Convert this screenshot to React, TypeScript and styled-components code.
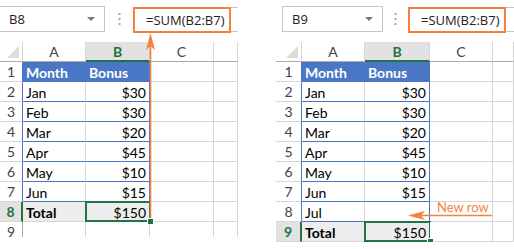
import React from 'react'
import styled, { createGlobalStyle, css } from 'styled-components'

const GREEN = '#217346'
const BLUE = '#4a76c6'
const GRID = '#d6d6d6'
const ORANGE = '#f5813f'

const GlobalStyle = createGlobalStyle`
  html, body {
    margin: 0;
    padding: 0;
    background: #fff;
  }
  body {
    font-family: Lato, 'Open Sans', sans-serif;
  }
`

type RowKind = 'head' | 'data' | 'total' | 'empty'

interface SheetRow {
  kind: RowKind
  month?: string
  bonus?: string
}

interface SheetConfig {
  name: string
  cols: number[]
  nameOffset: number
  nameWidth: number
  dotsWidth: number
  height: number
  rows: SheetRow[]
}

const baseRows: SheetRow[] = [
  { kind: 'head', month: 'Month', bonus: 'Bonus' },
  { kind: 'data', month: 'Jan', bonus: '$30' },
  { kind: 'data', month: 'Feb', bonus: '$30' },
  { kind: 'data', month: 'Mar', bonus: '$20' },
  { kind: 'data', month: 'Apr', bonus: '$45' },
  { kind: 'data', month: 'May', bonus: '$10' },
  { kind: 'data', month: 'Jun', bonus: '$15' },
]

const leftSheet: SheetConfig = {
  name: 'B8',
  cols: [23, 63, 64, 64, 24],
  nameOffset: -1,
  nameWidth: 106,
  dotsWidth: 28,
  height: 237,
  rows: [...baseRows, { kind: 'total', month: 'Total', bonus: '$150' }, { kind: 'empty' }],
}

const rightSheet: SheetConfig = {
  name: 'B9',
  cols: [26, 63, 65, 63, 21],
  nameOffset: 6,
  nameWidth: 101,
  dotsWidth: 25,
  height: 242,
  rows: [
    ...baseRows,
    { kind: 'data', month: 'Jul', bonus: '' },
    { kind: 'total', month: 'Total', bonus: '$150' },
  ],
}

const Page = styled.div`
  display: flex;
  gap: 38px;
  width: 514px;
`

const Panel = styled.div<{ $height: number }>`
  position: relative;
  width: 238px;
  height: ${(p) => p.$height}px;
  overflow: hidden;
`

const FormulaBar = styled.div`
  display: flex;
  align-items: stretch;
  margin-top: 6px;
  height: 26px;
`

const NameBox = styled.div<{ $offset: number; $width: number }>`
  box-sizing: border-box;
  margin-left: ${(p) => p.$offset}px;
  width: ${(p) => p.$width}px;
  border: 1px solid #c6c6c6;
  display: flex;
  align-items: center;
  justify-content: space-between;
  padding: 0 9px 0 9px;
  font-family: 'Open Sans', sans-serif;
  font-size: 13px;
  color: #222;
`

const DropArrow = styled.span`
  width: 0;
  height: 0;
  border-left: 4px solid transparent;
  border-right: 4px solid transparent;
  border-top: 4px solid #777;
`

const Dots = styled.div<{ $width: number }>`
  width: ${(p) => p.$width}px;
  display: flex;
  align-items: center;
  justify-content: center;
`

const FormulaArea = styled.div`
  flex: 1;
  box-sizing: border-box;
  border-top: 1px solid #c6c6c6;
  border-bottom: 1px solid #c6c6c6;
  margin-top: 1px;
  display: flex;
`

const FormulaBox = styled.div`
  box-sizing: border-box;
  width: 98px;
  height: 26px;
  margin-top: -1px;
  border: 2px solid ${ORANGE};
  display: flex;
  align-items: center;
  padding-left: 11px;
  font-family: 'Open Sans', sans-serif;
  font-size: 13px;
  color: #222;
`

const Grid = styled.div<{ $cols: number[] }>`
  display: grid;
  grid-template-columns: ${(p) => p.$cols.map((c) => `${c}px`).join(' ')};
  grid-auto-rows: 20px;
  margin-top: 10px;
`

const cellBase = css`
  box-sizing: border-box;
  display: flex;
  align-items: center;
  font-size: 14px;
  color: #000;
  white-space: nowrap;
  overflow: visible;
  position: relative;
`

const ColHead = styled.div<{ $selected?: boolean }>`
  ${cellBase};
  justify-content: center;
  color: #444;
  border-right: 1px solid ${GRID};
  border-bottom: 1px solid #ababab;
  ${(p) =>
    p.$selected &&
    css`
      background: #e2e2e2;
      color: ${GREEN};
      font-weight: 700;
      border-bottom: 2px solid ${GREEN};
    `}
`

const Corner = styled.div`
  ${cellBase};
  border-right: 1px solid ${GRID};
  border-bottom: 1px solid #ababab;
  &::after {
    content: '';
    position: absolute;
    right: 3px;
    bottom: 3px;
    border-left: 12px solid transparent;
    border-bottom: 12px solid #dcdcdc;
  }
`

const RowHead = styled.div<{ $edge: string; $selected?: boolean }>`
  ${cellBase};
  justify-content: center;
  color: #444;
  border-bottom: 1px solid ${GRID};
  border-right: ${(p) => (p.$selected ? 2 : 1)}px solid ${(p) => p.$edge};
  ${(p) =>
    p.$selected &&
    css`
      background: #e2e2e2;
      color: ${GREEN};
      font-weight: 700;
    `}
`

const Cell = styled.div<{
  $fill?: string
  $bold?: boolean
  $light?: boolean
  $right?: boolean
  $edgeRight: string
  $edgeBottom: string
  $active?: boolean
}>`
  ${cellBase};
  background: ${(p) => p.$fill || '#fff'};
  font-weight: ${(p) => (p.$bold ? 700 : 400)};
  color: ${(p) => (p.$light ? '#fff' : '#000')};
  justify-content: ${(p) => (p.$right ? 'flex-end' : 'flex-start')};
  padding: 1px 3px 0 3px;
  border-right: 1px solid ${(p) => p.$edgeRight};
  border-bottom: 1px solid ${(p) => p.$edgeBottom};
  ${(p) =>
    p.$active &&
    css`
      &::after {
        content: '';
        position: absolute;
        left: -1px;
        top: -1px;
        right: -2px;
        bottom: -1px;
        border: 2px solid ${GREEN};
      }
      &::before {
        content: '';
        position: absolute;
        right: -5px;
        bottom: -4px;
        width: 5px;
        height: 5px;
        background: ${GREEN};
        border: 1px solid #fff;
        z-index: 2;
      }
    `}
`

const Note = styled.div`
  position: absolute;
  left: 161px;
  top: 199px;
  font-family: Lato, sans-serif;
  font-size: 13px;
  color: ${ORANGE};
`

const Overlay = styled.svg`
  position: absolute;
  overflow: visible;
  pointer-events: none;
`

const DotsIcon = () => (
  <svg width="3" height="14" viewBox="0 0 3 14">
    <rect x="0.5" y="1" width="2" height="2" fill="#a6a6a6" />
    <rect x="0.5" y="6" width="2" height="2" fill="#a6a6a6" />
    <rect x="0.5" y="11" width="2" height="2" fill="#a6a6a6" />
  </svg>
)

const letters = ['A', 'B', 'C', '']

const Sheet = ({ sheet, children }: { sheet: SheetConfig; children?: React.ReactNode }) => (
  <Panel $height={sheet.height}>
    <FormulaBar>
      <NameBox $offset={sheet.nameOffset} $width={sheet.nameWidth}>
        <span>{sheet.name}</span>
        <DropArrow />
      </NameBox>
      <Dots $width={sheet.dotsWidth}>
        <DotsIcon />
      </Dots>
      <FormulaArea>
        <FormulaBox>=SUM(B2:B7)</FormulaBox>
      </FormulaArea>
    </FormulaBar>
    <Grid $cols={sheet.cols}>
      <Corner />
      {letters.map((l, i) => (
        <ColHead key={i} $selected={l === 'B'}>
          {l}
        </ColHead>
      ))}
      {sheet.rows.map((row, i) => {
        const inTable = row.kind === 'head' || row.kind === 'data'
        const isTotal = row.kind === 'total'
        const edge = isTotal ? GREEN : inTable ? BLUE : '#ababab'
        const fill = row.kind === 'head' ? BLUE : isTotal ? '#ededed' : undefined
        const tableBottom = inTable ? BLUE : GRID
        const inside = row.kind !== 'empty'
        return (
          <React.Fragment key={i}>
            <RowHead $edge={edge} $selected={isTotal}>
              {i + 1}
            </RowHead>
            <Cell
              $fill={fill}
              $bold={row.kind === 'head' || isTotal}
              $light={row.kind === 'head'}
              $edgeRight={row.kind === 'head' ? BLUE : GRID}
              $edgeBottom={tableBottom}
            >
              {row.month}
            </Cell>
            <Cell
              $fill={fill}
              $bold={row.kind === 'head'}
              $light={row.kind === 'head'}
              $right={row.kind !== 'head'}
              $edgeRight={inside ? BLUE : GRID}
              $edgeBottom={tableBottom}
              $active={isTotal}
            >
              {row.bonus}
            </Cell>
            <Cell $edgeRight={GRID} $edgeBottom={GRID} />
            <Cell $edgeRight={GRID} $edgeBottom={GRID} />
          </React.Fragment>
        )
      })}
    </Grid>
    {children}
  </Panel>
)

export default function App() {
  return (
    <>
      <GlobalStyle />
      <Page>
        <Sheet sheet={leftSheet}>
          <Overlay width="9" height="190" style={{ left: 146, top: 32 }}>
            <line x1="4.5" y1="8" x2="4.5" y2="190" stroke={ORANGE} strokeWidth="1.6" />
            <polygon points="4.5,1 9,18 4.5,14 0,18" fill={ORANGE} />
          </Overlay>
        </Sheet>
        <Sheet sheet={rightSheet}>
          <Note>New row</Note>
          <Overlay width="84" height="9" style={{ left: 132, top: 211 }}>
            <line x1="8" y1="4.5" x2="84" y2="4.5" stroke={ORANGE} strokeWidth="1.6" />
            <polygon points="0,4.5 17,0 13,4.5 17,9" fill={ORANGE} />
          </Overlay>
        </Sheet>
      </Page>
    </>
  )
}
